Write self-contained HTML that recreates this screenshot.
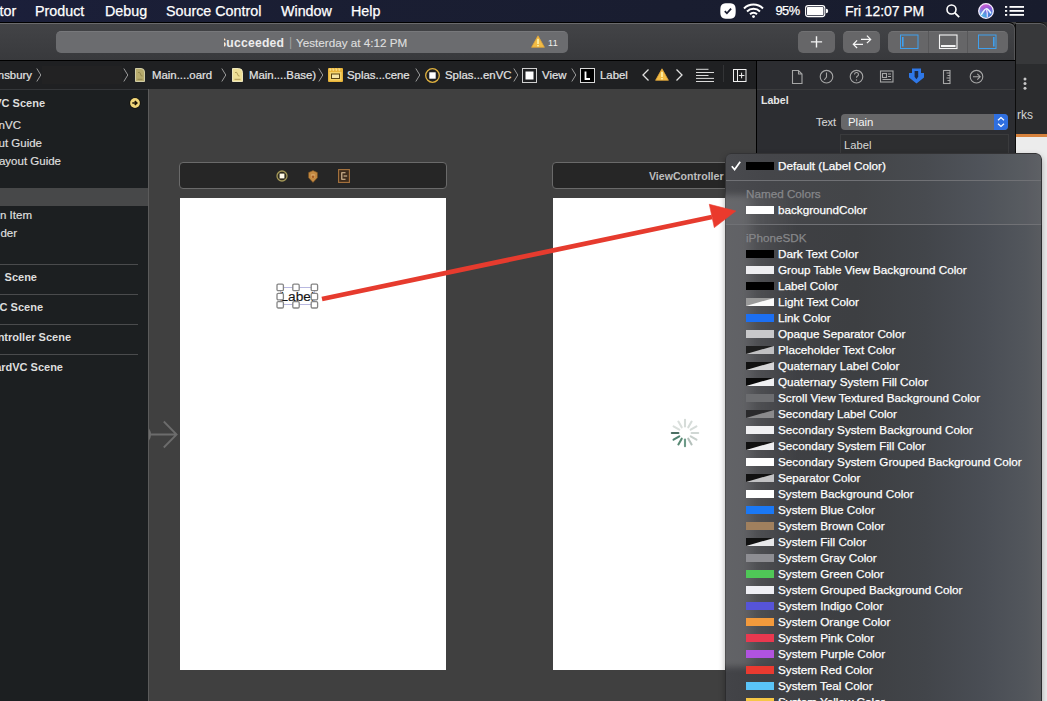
<!DOCTYPE html>
<html><head><meta charset="utf-8">
<style>
*{margin:0;padding:0;box-sizing:border-box}
html,body{width:1047px;height:701px;overflow:hidden;background:#404040;font-family:"Liberation Sans",sans-serif;position:relative}
.a{position:absolute}
.t{position:absolute;white-space:nowrap;line-height:1}
svg{position:absolute;overflow:visible}
#menubar{left:0;top:0;width:1047px;height:22px;background:linear-gradient(90deg,#1b1f3a 0px,#1a1e33 300px,#181c2d 1047px)}
#menubar .t{color:#fff;font-size:14.3px;top:4px;-webkit-text-stroke:0.25px #fff}
#tb{left:0;top:22px;width:1016px;height:39px;background:linear-gradient(#434447,#38393c);border-top:1px solid #000;border-right:1px solid #0c0c0c;border-top-right-radius:7px;box-shadow:inset 0 1px 0 #6a6a6c,inset -1px 0 0 #555557}
#tbline{left:0;top:23px;width:1010px;height:1px;background:#6a6a6c}
#tb2{left:1016px;top:22px;width:31px;height:701px;background:#2b2c2e}
#jump{left:0;top:60px;width:757px;height:29px;background:#1f2022;border-top:1px solid #000}
#nav{left:0;top:89px;width:148px;height:612px;background:#1c1f21}
#navborder{left:148px;top:89px;width:1px;height:612px;background:#5b5b5b}
#insp{left:756px;top:60px;width:260px;height:641px;background:#2c2d31;border-left:1px solid #000;border-top:1px solid #000}
.jt{color:#e4e4e4;font-size:11.4px;top:70px;-webkit-text-stroke:0.2px currentColor}
.nt{color:#dedede;font-size:11.5px;-webkit-text-stroke:0.2px currentColor}
.nb{color:#dedede;font-size:11px;font-weight:bold}
.sep{position:absolute;left:0;width:138px;height:1px;background:#4a4b4d}
#popup{left:725px;top:153px;width:317px;height:560px;border-radius:6px;overflow:hidden;box-shadow:0 3px 6px rgba(0,0,0,.3)}
.pbg{position:absolute;left:0;top:0;width:100%;height:100%;background:linear-gradient(90deg,#434448 0px,#3f4044 40px,#3d3f42 130px,#42454a 200px,#4a4e55 260px,#52565c 300px,#5a5c60 317px);border-radius:6px;border:1px solid #2c2c2e}
.ptop{position:absolute;left:0;top:0;width:100%;height:72px;background:rgba(255,255,255,.035)}
.pstrip{position:absolute;left:-10px;top:42px;width:90px;height:472px;background:linear-gradient(90deg,rgba(255,255,255,.17) 0px,rgba(255,255,255,.17) 30px,rgba(255,255,255,.08) 42px,rgba(255,255,255,.03) 65px,rgba(255,255,255,0) 85px);filter:blur(3px)}
#popup .sw{position:absolute;left:21px;width:28px;height:8px}
.pl{position:absolute;left:53px;color:#fff;font-size:11.7px;white-space:nowrap;line-height:1;-webkit-text-stroke:0.25px currentColor}
.ph{color:#86878a}
.psep{position:absolute;left:1px;right:1px;height:1px;background:#707175}
</style></head><body>
<div id="menubar" class="a">
  <span class="t" style="left:-0.5px">tor</span>
  <span class="t" style="left:35px">Product</span>
  <span class="t" style="left:105px">Debug</span>
  <span class="t" style="left:166px">Source Control</span>
  <span class="t" style="left:281px">Window</span>
  <span class="t" style="left:351px">Help</span>
  <!-- status icons -->
  <svg style="left:720px;top:3px" width="16" height="16" viewBox="0 0 16 16"><path d="M8 0.3C1.6 0.3 0.3 1.6 0.3 8s1.3 7.7 7.7 7.7 7.7-1.3 7.7-7.7S14.4 0.3 8 0.3z" fill="#fff"/><path d="M4.8 8.2l2.1 2.1 4.2-4.6" stroke="#1a1e33" stroke-width="1.8" fill="none"/></svg>
  <svg style="left:743px;top:3px" width="21" height="15" viewBox="0 0 21 15"><path d="M1 5.5a13.5 13.5 0 0 1 19 0" stroke="#fff" stroke-width="2" fill="none"/><path d="M4 8.5a9.3 9.3 0 0 1 13 0" stroke="#fff" stroke-width="2" fill="none"/><path d="M7 11.3a5 5 0 0 1 7 0" stroke="#fff" stroke-width="2" fill="none"/><circle cx="10.5" cy="13.6" r="1.4" fill="#fff"/></svg>
  <span class="t" style="left:775.5px;top:4.5px;font-size:12.8px;letter-spacing:-0.5px">95%</span>
  <svg style="left:805px;top:5px" width="23" height="12" viewBox="0 0 23 12"><rect x="0.6" y="0.6" width="19.2" height="11" rx="2.6" stroke="#fff" stroke-width="1.1" fill="none"/><rect x="2" y="2" width="16.4" height="8.2" rx="0.8" fill="#fff"/><path d="M21 3.8a2.2 2.2 0 0 1 0 4.4z" fill="#fff"/></svg>
  <span class="t" style="left:845px;font-size:14px;letter-spacing:-0.1px">Fri 12:07 PM</span>
  <svg style="left:946px;top:4px" width="14" height="14" viewBox="0 0 14 14"><circle cx="5.5" cy="5.5" r="4.5" stroke="#fff" stroke-width="1.6" fill="none"/><path d="M8.8 8.8l4.4 4.4" stroke="#fff" stroke-width="1.8"/></svg>
  <svg style="left:978px;top:3px" width="16" height="16" viewBox="0 0 16 16"><defs><linearGradient id="sg" x1="0.3" y1="0" x2="0.6" y2="1"><stop offset="0" stop-color="#e062d2"/><stop offset="0.4" stop-color="#8f5ad8"/><stop offset="0.75" stop-color="#4a86dc"/><stop offset="1" stop-color="#3a58c8"/></linearGradient><linearGradient id="sg2" x1="0" y1="1" x2="1" y2="0"><stop offset="0" stop-color="#5fe0f0" stop-opacity=".9"/><stop offset="0.5" stop-color="#5fe0f0" stop-opacity="0"/></linearGradient></defs><circle cx="8" cy="8" r="7.3" fill="url(#sg)"/><circle cx="8" cy="8" r="7.3" fill="url(#sg2)"/><circle cx="8" cy="8" r="7.3" fill="none" stroke="#f6eeff" stroke-width="1.3"/><path d="M3.2 11.8Q7 5.5 8.5 5.8Q11 6.5 13 10.5" stroke="#e8f8ff" stroke-width="1.5" fill="none"/><path d="M8.3 6.2Q9.8 10 9.3 14" stroke="#e4d8ff" stroke-width="1.3" fill="none"/></svg>
  <svg style="left:1005px;top:6px" width="20" height="10" viewBox="0 0 20 10"><rect x="0" y="0" width="2.2" height="1.8" fill="#fff"/><rect x="4.5" y="0" width="14.5" height="1.8" fill="#fff"/><rect x="0" y="4" width="2.2" height="1.8" fill="#fff"/><rect x="4.5" y="4" width="14.5" height="1.8" fill="#fff"/><rect x="0" y="8" width="2.2" height="1.8" fill="#fff"/><rect x="4.5" y="8" width="14.5" height="1.8" fill="#fff"/></svg>
</div>

<div id="tb2" class="a"></div>
<div id="tb" class="a"></div>

<div class="a" style="left:56px;top:31px;width:512px;height:22px;border-radius:5px;background:#6b6c6f;border-top:1px solid #77787b"></div>
<div class="a" style="left:223.5px;top:31px;width:200px;height:22px;overflow:hidden">
  <span class="t" style="left:-5.5px;top:6px;color:#ededed;font-size:12.2px;font-weight:bold;letter-spacing:0.2px">Succeeded</span>
  <span class="t" style="left:65.5px;top:5px;color:#a0a0a0;font-size:12px">|</span>
  <span class="t" style="left:72.5px;top:6px;color:#dedede;font-size:11.7px;-webkit-text-stroke:0.15px currentColor">Yesterday at 4:12 PM</span>
</div>
<svg style="left:531px;top:35px" width="14" height="13" viewBox="0 0 14 13"><path d="M7 0.8 L13.4 12.3 L0.6 12.3z" fill="#f2bc45" stroke="#e0a53a" stroke-width="0.8" stroke-linejoin="round"/><rect x="6.2" y="4" width="1.6" height="5" fill="#fff6b0"/><rect x="6.2" y="10" width="1.6" height="1.4" fill="#fff6b0"/></svg>
<span class="t" style="left:548px;top:39px;color:#f0f0f0;font-size:9px;letter-spacing:0.5px">11</span>

<div class="a" style="left:798px;top:31px;width:37px;height:22px;border-radius:5px;background:#666668;border-top:1px solid #717173"></div>
<svg style="left:798px;top:31px" width="37" height="22" viewBox="0 0 37 22"><path d="M18.5 5.3v11.2M12.9 10.9h11.2" stroke="#f4f4f4" stroke-width="1.4"/></svg>
<div class="a" style="left:843px;top:31px;width:37px;height:22px;border-radius:5px;background:#666668;border-top:1px solid #717173"></div>
<svg style="left:843px;top:31px" width="37" height="22" viewBox="0 0 37 22"><path d="M18 8.4H27.6M23.9 4.6L27.7 8.4L23.9 12.2" stroke="#f6f6f6" stroke-width="1.2" fill="none"/><path d="M20 13.3H10.6M14.1 9.4L10.3 13.3L14.1 17" stroke="#f6f6f6" stroke-width="1.2" fill="none"/></svg>
<div class="a" style="left:888px;top:31px;width:120px;height:22px;border-radius:5px;background:#666668;border-top:1px solid #717173"></div>
<div class="a" style="left:928px;top:31px;width:1px;height:22px;background:#58585a"></div>
<div class="a" style="left:967px;top:31px;width:1px;height:22px;background:#58585a"></div>
<svg style="left:888px;top:31px" width="120" height="22" viewBox="0 0 120 22"><rect x="12.5" y="4" width="17.5" height="13.5" stroke="#3fa0ee" stroke-width="1" fill="none"/><rect x="14" y="6" width="1.6" height="9.5" fill="#3fa0ee"/>
<rect x="51.5" y="4" width="17.5" height="13.5" stroke="#f5f5f5" stroke-width="1.1" fill="none"/><rect x="53" y="14" width="14.5" height="2" fill="#f5f5f5"/>
<rect x="90.5" y="4" width="17.5" height="13.5" stroke="#3fa0ee" stroke-width="1" fill="none"/><rect x="105" y="6" width="1.6" height="9.5" fill="#3fa0ee"/></svg>


<div id="jump" class="a"></div>

<!-- canvas -->
<div class="a" style="left:179px;top:162px;width:268px;height:27px;border:1px solid #6a6a6a;border-radius:4px;background:#262626"></div>
<svg style="left:276px;top:170px" width="12" height="12" viewBox="0 0 12 12"><circle cx="6" cy="6" r="5" fill="#2e2a1c" stroke="#a49858" stroke-width="1.3"/><rect x="3.6" y="3.6" width="4.8" height="4.8" fill="#fffbea"/></svg>
<svg style="left:308px;top:170px" width="10" height="13" viewBox="0 0 10 13"><path d="M5 0.6L9.4 2.6v5.2L5 12.4 0.6 7.8V2.6z" fill="#c48a42" stroke="#7a5020" stroke-width="0.6"/><path d="M3.3 4.2h3.4v3.6H3.3z" fill="#dca868"/><circle cx="5" cy="6.8" r="1.3" fill="#a85e22"/></svg>
<svg style="left:338px;top:169px" width="12" height="14" viewBox="0 0 12 14"><rect x="0.6" y="0.6" width="10.8" height="12.8" fill="#3e2c1c" stroke="#a8743e" stroke-width="1.1"/><path d="M7.5 3.8H3.8v6.4h3.7" stroke="#e6c8a0" stroke-width="1.1" fill="none"/><path d="M5.6 7h3.6" stroke="#e6c8a0" stroke-width="1"/></svg>
<div class="a" style="left:180px;top:198px;width:266px;height:472px;background:#fff"></div>
<div class="a" style="left:552px;top:162px;width:200px;height:27px;border:1px solid #6a6a6a;border-radius:4px;background:#262626"></div>
<span class="t" style="left:649px;top:171px;color:#bdbdbd;font-size:10.6px;font-weight:bold">ViewController</span>
<div class="a" style="left:553px;top:198px;width:200px;height:472px;background:#fff"></div>
<svg style="left:148px;top:419px" width="32" height="32" viewBox="0 0 32 32"><path d="M1 15.5h27.5M15.8 2.5l12.8 13-12.8 13" stroke="#6c6c6c" stroke-width="1.8" fill="none"/><path d="M1 9.5Q5 15.5 1 21.5Z" fill="#6c6c6c"/></svg>
<!-- label -->
<div class="a" style="left:280px;top:287px;width:35px;height:18px;border:1px solid #b8b8e0"></div>
<span class="t" style="left:280.5px;top:289.5px;color:#141414;font-size:13.7px;-webkit-text-stroke:0.15px #141414">Label</span>
<svg style="left:275px;top:282px" width="46" height="28" viewBox="0 0 46 28">
<g fill="#fff" stroke="#858585" stroke-width="1.3">
<rect x="2" y="2.2" width="6.4" height="6.4" rx="1.2"/><rect x="17.8" y="2.2" width="6.4" height="6.4" rx="1.2"/><rect x="36.2" y="2.2" width="6.4" height="6.4" rx="1.2"/>
<rect x="2" y="11.4" width="6.4" height="6.4" rx="1.2"/><rect x="36.2" y="11.4" width="6.4" height="6.4" rx="1.2"/>
<rect x="2" y="19.6" width="6.4" height="6.4" rx="1.2"/><rect x="17.8" y="19.6" width="6.4" height="6.4" rx="1.2"/><rect x="36.2" y="19.6" width="6.4" height="6.4" rx="1.2"/>
</g></svg>
<!-- spinner -->
<svg style="left:665px;top:413.4px" width="40" height="40" viewBox="-20 -20 40 40">
<g stroke-linecap="round" stroke-width="2.1">
<line x1="0" y1="-6.6" x2="0" y2="-13.2" stroke="#d6dcd9" transform="rotate(0)"/>
<line x1="0" y1="-6.6" x2="0" y2="-13.2" stroke="#d6dcd9" transform="rotate(30)"/>
<line x1="0" y1="-6.6" x2="0" y2="-13.2" stroke="#d6dcd9" transform="rotate(60)"/>
<line x1="0" y1="-6.6" x2="0" y2="-13.2" stroke="#d0d7d4" transform="rotate(90)"/>
<line x1="0" y1="-6.6" x2="0" y2="-13.2" stroke="#c8d0cc" transform="rotate(120)"/>
<line x1="0" y1="-6.6" x2="0" y2="-13.2" stroke="#b4c0bb" transform="rotate(150)"/>
<line x1="0" y1="-6.6" x2="0" y2="-13.2" stroke="#6d9a88" transform="rotate(180)"/>
<line x1="0" y1="-6.6" x2="0" y2="-13.2" stroke="#5a8a75" transform="rotate(210)"/>
<line x1="0" y1="-6.6" x2="0" y2="-13.2" stroke="#4f8270" transform="rotate(240)"/>
<line x1="0" y1="-6.6" x2="0" y2="-13.2" stroke="#4a6e62" transform="rotate(270)"/>
<line x1="0" y1="-6.6" x2="0" y2="-13.2" stroke="#dadfdc" transform="rotate(300)"/>
<line x1="0" y1="-6.6" x2="0" y2="-13.2" stroke="#dadfdc" transform="rotate(330)"/>
</g></svg>
<div id="nav" class="a"></div>
<div id="navborder" class="a"></div>
<div class="a" style="left:0;top:89px;width:148px;height:1px;background:#35373a"></div>
<span class="t nb" style="right:1002px;top:98px">VC Scene</span>
<svg style="left:129px;top:97px" width="12" height="12" viewBox="0 0 12 12"><circle cx="6" cy="6" r="5.6" fill="#120f05"/><circle cx="6" cy="6" r="4.9" fill="#f0d67a"/><path d="M3.3 6h3.8M5.8 4L7.9 6 5.8 8" stroke="#1a1206" stroke-width="1.5" fill="none"/></svg>
<span class="t nt" style="right:1026px;top:119.5px">enVC</span>
<span class="t nt" style="right:1005px;top:138px">out Guide</span>
<span class="t nt" style="right:986px;top:155.5px">Layout Guide</span>
<div class="a" style="left:0;top:188px;width:148px;height:18px;background:#474849"></div>
<span class="t nt" style="right:1015px;top:210px">n Item</span>
<span class="t nt" style="right:1030px;top:228px">der</span>
<div class="sep" style="top:264px"></div>
<span class="t nb" style="right:1010px;top:272px"> Scene</span>
<div class="sep" style="top:294px"></div>
<span class="t nb" style="right:1004px;top:302px">VC Scene</span>
<div class="sep" style="top:324px"></div>
<span class="t nb" style="right:976px;top:332px">ontroller Scene</span>
<div class="sep" style="top:354px"></div>
<span class="t nb" style="right:984px;top:362px">ardVC Scene</span>

<div id="insp" class="a"></div>
<!-- jump bar -->
<span class="t jt" style="right:1015px">nsbury</span>
<svg style="left:36px;top:67px" width="6" height="16" viewBox="0 0 6 16"><path d="M0.8 1.5L4.8 8 0.8 14.5" stroke="#9a9a9a" stroke-width="1" fill="none"/></svg>
<div class="a" style="left:42px;top:66px;width:80px;height:18px;background:#222223"></div>
<svg style="left:123px;top:67px" width="6" height="16" viewBox="0 0 6 16"><path d="M0.8 1.5L4.8 8 0.8 14.5" stroke="#9a9a9a" stroke-width="1" fill="none"/></svg>
<svg style="left:135px;top:68px" width="10" height="14" viewBox="0 0 10 14"><path d="M0.5 0.5h5.5q3.5 0 3.5 3.5v9.5h-9z" fill="#b6aa6c" stroke="#dcd8b0" stroke-width="0.9"/><path d="M3 4.5q2-1 2.5 1.5q0.5 2.5 2 2M2.5 11.3h5" stroke="#8c8048" stroke-width="0.9" fill="none"/></svg>
<span class="t jt" style="left:152px">Main....oard</span>
<svg style="left:221px;top:67px" width="6" height="16" viewBox="0 0 6 16"><path d="M0.8 1.5L4.8 8 0.8 14.5" stroke="#9a9a9a" stroke-width="1" fill="none"/></svg>
<svg style="left:232px;top:68px" width="11" height="14" viewBox="0 0 11 14"><path d="M0.5 0.5h6q4 0 4 4v9h-10z" fill="#eedf96" stroke="#f8f2c8" stroke-width="0.9"/><path d="M3 4.5q2-1 2.5 1.5q0.5 2.5 2 2M2.5 11.3h6" stroke="#a89250" stroke-width="0.9" fill="none"/></svg>
<span class="t jt" style="left:249px">Main....Base)</span>
<svg style="left:318px;top:67px" width="6" height="16" viewBox="0 0 6 16"><path d="M0.8 1.5L4.8 8 0.8 14.5" stroke="#9a9a9a" stroke-width="1" fill="none"/></svg>
<svg style="left:328px;top:68px" width="15" height="14" viewBox="0 0 15 14"><rect x="0" y="0" width="15" height="14" rx="1" fill="#e8b43a"/><path d="M1 1h2l-1 2M4 1h2l-1 2M7 1h2l-1 2M10 1h2l-1 2" stroke="#fbe7a0" stroke-width="0.8" fill="none"/><rect x="1.5" y="4" width="12" height="8.5" fill="#f5d46a"/><rect x="3.5" y="6" width="8" height="4.5" stroke="#5a4515" stroke-width="1" fill="#f7e7a8"/></svg>
<span class="t jt" style="left:347px">Splas...cene</span>
<svg style="left:415px;top:67px" width="6" height="16" viewBox="0 0 6 16"><path d="M0.8 1.5L4.8 8 0.8 14.5" stroke="#9a9a9a" stroke-width="1" fill="none"/></svg>
<svg style="left:425px;top:68px" width="15" height="15" viewBox="0 0 15 15"><circle cx="7.5" cy="7.5" r="6.8" fill="#1f2022" stroke="#e1b23f" stroke-width="1.3"/><rect x="4.3" y="4.3" width="6.4" height="6.4" fill="#fff"/></svg>
<span class="t jt" style="left:445px">Splas...enVC</span>
<svg style="left:513px;top:67px" width="6" height="16" viewBox="0 0 6 16"><path d="M0.8 1.5L4.8 8 0.8 14.5" stroke="#9a9a9a" stroke-width="1" fill="none"/></svg>
<svg style="left:522px;top:68px" width="15" height="15" viewBox="0 0 15 15"><rect x="0.5" y="0.5" width="14" height="14" fill="#1f2022" stroke="#cfcfcf" stroke-width="1"/><rect x="3.5" y="3.5" width="8" height="8" fill="#fff"/></svg>
<span class="t jt" style="left:542px">View</span>
<svg style="left:571px;top:67px" width="6" height="16" viewBox="0 0 6 16"><path d="M0.8 1.5L4.8 8 0.8 14.5" stroke="#9a9a9a" stroke-width="1" fill="none"/></svg>
<svg style="left:580px;top:68px" width="15" height="15" viewBox="0 0 15 15"><rect x="0.5" y="0.5" width="14" height="14" fill="#000" stroke="#d8d8d8" stroke-width="1"/><path d="M5.5 3.5v7.5h4.5" stroke="#fff" stroke-width="1.8" fill="none"/></svg>
<span class="t jt" style="left:600px">Label</span>
<svg style="left:641px;top:68px" width="9" height="14" viewBox="0 0 9 14"><path d="M7.5 1.5L2 7l5.5 5.5" stroke="#e0e0e0" stroke-width="1.3" fill="none"/></svg>
<svg style="left:655px;top:68px" width="14" height="13" viewBox="0 0 14 13"><path d="M7 0.8 L13.4 12.3 L0.6 12.3z" fill="#f2bc45" stroke="#e0a53a" stroke-width="0.8" stroke-linejoin="round"/><rect x="6.2" y="4" width="1.6" height="5" fill="#fff6b0"/><rect x="6.2" y="10" width="1.6" height="1.4" fill="#fff6b0"/></svg>
<svg style="left:675px;top:68px" width="9" height="14" viewBox="0 0 9 14"><path d="M1.5 1.5L7 7l-5.5 5.5" stroke="#e0e0e0" stroke-width="1.3" fill="none"/></svg>
<svg style="left:696px;top:68px" width="19" height="15" viewBox="0 0 19 15"><path d="M0 1.3h12.5M0 4.5h18M0 7.5h12.5M0 10.4h18M0 13.5h18" stroke="#f0f0f0" stroke-width="0.9"/></svg>
<div class="a" style="left:723px;top:65px;width:1px;height:17px;background:#333436"></div>
<svg style="left:733px;top:69px" width="14" height="13" viewBox="0 0 14 13"><rect x="0.5" y="0.5" width="12.5" height="12" stroke="#f0f0f0" stroke-width="1" fill="none"/><path d="M4.5 0.5v12M8.6 3.7v5.6M5.8 6.5h5.6" stroke="#f0f0f0" stroke-width="1" fill="none"/></svg>


<!-- inspector -->
<div class="a" style="left:757px;top:89px;width:259px;height:1px;background:#3b3c3e"></div>
<svg style="left:785px;top:64px" width="210" height="26" viewBox="0 0 210 26">
<g stroke="#a6a6a6" stroke-width="1.1" fill="none">
<path d="M7.5 6.5h6l3.5 3.5v9.5h-9.5z M13.5 6.5v3.5h3.5"/>
<circle cx="41.5" cy="12.7" r="6.3"/><path d="M41.5 8.5v4.5l-2.3 3"/>
<circle cx="71.5" cy="12.7" r="6.3"/>
<rect x="95.5" y="7" width="12.5" height="11"/><rect x="97.5" y="9.5" width="4" height="4"/><path d="M103 10h3M103 12.5h3M97.5 15.5h8.5"/>
<rect x="158.5" y="6.5" width="6.5" height="13"/><path d="M161.5 9h3.5M162.5 11.5h2.5M161.5 14h3.5M162.5 16.5h2.5"/>
<circle cx="191.5" cy="12.7" r="6.3"/><path d="M188 12.7h7M192.3 9.8l2.9 2.9-2.9 2.9"/>
</g>
<path d="M69.5 10.5a2 2 0 1 1 2.8 1.8c-.6.4-.8.8-.8 1.5" stroke="#a6a6a6" stroke-width="1.1" fill="none"/><circle cx="71.5" cy="16" r="0.7" fill="#a6a6a6"/>
<path d="M127 4.5H136V9H139V13.5L131.5 19.5L124 13.5V9H127Z" fill="#2f78e8"/><path d="M129.6 7H133.2V12.8L131.4 15.3L129.6 12.8Z" fill="#1c2a44"/>
</svg>
<span class="t" style="left:761px;top:94.5px;color:#e6e6e6;font-size:10.6px;font-weight:bold">Label</span>
<span class="t" style="left:816px;top:117px;color:#d2d2d2;font-size:11px;-webkit-text-stroke:0.15px currentColor">Text</span>
<div class="a" style="left:841px;top:114px;width:167px;height:16px;border-radius:4px;background:#676769;overflow:hidden"><div class="a" style="right:0;top:0;width:14px;height:16px;background:#2f6fe0"></div></div>
<svg style="left:994px;top:114px" width="14" height="16" viewBox="0 0 14 16"><path d="M4 6.3l3-2.8 3 2.8M4 9.7l3 2.8 3-2.8" stroke="#fff" stroke-width="1.2" fill="none"/></svg>
<span class="t" style="left:848px;top:117px;color:#f4f4f4;font-size:11.4px">Plain</span>
<div class="a" style="left:840px;top:134px;width:169px;height:30px;border:1px solid #3a3b3d;background:#2d2e30"></div>
<span class="t" style="left:844px;top:140px;color:#d8d8d8;font-size:11.2px">Label</span>
<!-- right window -->
<div class="a" style="left:1015px;top:24px;width:1px;height:677px;background:#0c0c0c"></div>
<div class="a" style="left:1016px;top:22px;width:31px;height:43px;background:#37383a;border-top:1px solid #111;border-top-right-radius:7px;box-shadow:inset 0 1px 0 #606062"></div>
<div class="a" style="left:1016px;top:64px;width:31px;height:70px;background:#2b2c2e"></div>
<svg style="left:1022px;top:76px" width="6" height="15" viewBox="0 0 6 15"><circle cx="3" cy="3" r="1.5" fill="#c8c8c8"/><circle cx="3" cy="7.6" r="1.5" fill="#c8c8c8"/><circle cx="3" cy="12.3" r="1.5" fill="#c8c8c8"/></svg>
<span class="t" style="left:1017px;top:109px;color:#d4d4d4;font-size:12px">rks</span>
<div class="a" style="left:1016px;top:134px;width:31px;height:3px;background:#d7823c"></div>
<div class="a" style="left:1016px;top:137px;width:31px;height:564px;background:#ececec"></div>
<div id="popup" class="a">
<div class="pbg"></div><div class="ptop"></div><div class="pstrip"></div>
<svg class="a" style="left:6px;top:8px" width="10" height="10" viewBox="0 0 10 10"><path d="M0.8 5.3L3.6 8.6 9.2 0.8" stroke="#fff" stroke-width="1.7" fill="none"/></svg>
<div class="sw" style="top:9px;background:#000"></div><span class="pl" style="top:7px">Default (Label Color)</span>
<div class="psep" style="top:27px"></div>
<span class="pl ph" style="top:35px;left:21px">Named Colors</span>
<div class="sw" style="top:53px;background:#fff"></div><span class="pl" style="top:51px">backgroundColor</span>
<div class="psep" style="top:71px"></div>
<span class="pl ph" style="top:79px;left:21px">iPhoneSDK</span>
<div class="sw" style="top:97px;background:#000"></div><span class="pl" style="top:95px">Dark Text Color</span>
<div class="sw" style="top:113px;background:#ededf0"></div><span class="pl" style="top:111px">Group Table View Background Color</span>
<div class="sw" style="top:129px;background:#000"></div><span class="pl" style="top:127px">Label Color</span>
<svg class="sw" style="top:145px" width="28" height="8" viewBox="0 0 28 8" preserveAspectRatio="none"><rect width="28" height="8" fill="#fafafa"/><path d="M0 0H28L0 8Z" fill="#9a9a9a"/></svg><span class="pl" style="top:143px">Light Text Color</span>
<div class="sw" style="top:161px;background:#1c6ff2"></div><span class="pl" style="top:159px">Link Color</span>
<div class="sw" style="top:177px;background:#c8c8ca"></div><span class="pl" style="top:175px">Opaque Separator Color</span>
<svg class="sw" style="top:193px" width="28" height="8" viewBox="0 0 28 8" preserveAspectRatio="none"><rect width="28" height="8" fill="#c0c0c2"/><path d="M0 0H28L0 8Z" fill="#1e1e1e"/></svg><span class="pl" style="top:191px">Placeholder Text Color</span>
<svg class="sw" style="top:209px" width="28" height="8" viewBox="0 0 28 8" preserveAspectRatio="none"><rect width="28" height="8" fill="#d4d4d6"/><path d="M0 0H28L0 8Z" fill="#111"/></svg><span class="pl" style="top:207px">Quaternary Label Color</span>
<svg class="sw" style="top:225px" width="28" height="8" viewBox="0 0 28 8" preserveAspectRatio="none"><rect width="28" height="8" fill="#f0f0f2"/><path d="M0 0H28L0 8Z" fill="#0a0a0a"/></svg><span class="pl" style="top:223px">Quaternary System Fill Color</span>
<div class="sw" style="top:241px;background:#6c6d70"></div><span class="pl" style="top:239px">Scroll View Textured Background Color</span>
<svg class="sw" style="top:257px" width="28" height="8" viewBox="0 0 28 8" preserveAspectRatio="none"><rect width="28" height="8" fill="#8a8a8c"/><path d="M0 0H28L0 8Z" fill="#2a2a2c"/></svg><span class="pl" style="top:255px">Secondary Label Color</span>
<div class="sw" style="top:273px;background:#f0f0f2"></div><span class="pl" style="top:271px">Secondary System Background Color</span>
<svg class="sw" style="top:289px" width="28" height="8" viewBox="0 0 28 8" preserveAspectRatio="none"><rect width="28" height="8" fill="#ececee"/><path d="M0 0H28L0 8Z" fill="#111"/></svg><span class="pl" style="top:287px">Secondary System Fill Color</span>
<div class="sw" style="top:305px;background:#fff"></div><span class="pl" style="top:303px">Secondary System Grouped Background Color</span>
<svg class="sw" style="top:321px" width="28" height="8" viewBox="0 0 28 8" preserveAspectRatio="none"><rect width="28" height="8" fill="#c2c2c4"/><path d="M0 0H28L0 8Z" fill="#111"/></svg><span class="pl" style="top:319px">Separator Color</span>
<div class="sw" style="top:337px;background:#fff"></div><span class="pl" style="top:335px">System Background Color</span>
<div class="sw" style="top:353px;background:#1a78f5"></div><span class="pl" style="top:351px">System Blue Color</span>
<div class="sw" style="top:369px;background:#a0805e"></div><span class="pl" style="top:367px">System Brown Color</span>
<svg class="sw" style="top:385px" width="28" height="8" viewBox="0 0 28 8" preserveAspectRatio="none"><rect width="28" height="8" fill="#e8e8ea"/><path d="M0 0H28L0 8Z" fill="#111"/></svg><span class="pl" style="top:383px">System Fill Color</span>
<div class="sw" style="top:401px;background:#8e8e93"></div><span class="pl" style="top:399px">System Gray Color</span>
<div class="sw" style="top:417px;background:#4fc757"></div><span class="pl" style="top:415px">System Green Color</span>
<div class="sw" style="top:433px;background:#efeff4"></div><span class="pl" style="top:431px">System Grouped Background Color</span>
<div class="sw" style="top:449px;background:#5654d8"></div><span class="pl" style="top:447px">System Indigo Color</span>
<div class="sw" style="top:465px;background:#f39a3c"></div><span class="pl" style="top:463px">System Orange Color</span>
<div class="sw" style="top:481px;background:#e9384f"></div><span class="pl" style="top:479px">System Pink Color</span>
<div class="sw" style="top:497px;background:#b053e0"></div><span class="pl" style="top:495px">System Purple Color</span>
<div class="sw" style="top:513px;background:#ea3a30"></div><span class="pl" style="top:511px">System Red Color</span>
<div class="sw" style="top:529px;background:#5ac4f8"></div><span class="pl" style="top:527px">System Teal Color</span>
<div class="sw" style="top:545px;background:#f6c746"></div><span class="pl" style="top:543px">System Yellow Color</span>
</div>

<svg style="left:0;top:0" width="1047" height="701" viewBox="0 0 1047 701"><path d="M322 299L712 217" stroke="#e63b2e" stroke-width="4.8" fill="none"/><path d="M709.3 204.3L735.8 211L714.3 227.6Z" fill="#ea3a2d" stroke="#ea3a2d" stroke-width="0.6" stroke-linejoin="round"/></svg>
</body></html>
